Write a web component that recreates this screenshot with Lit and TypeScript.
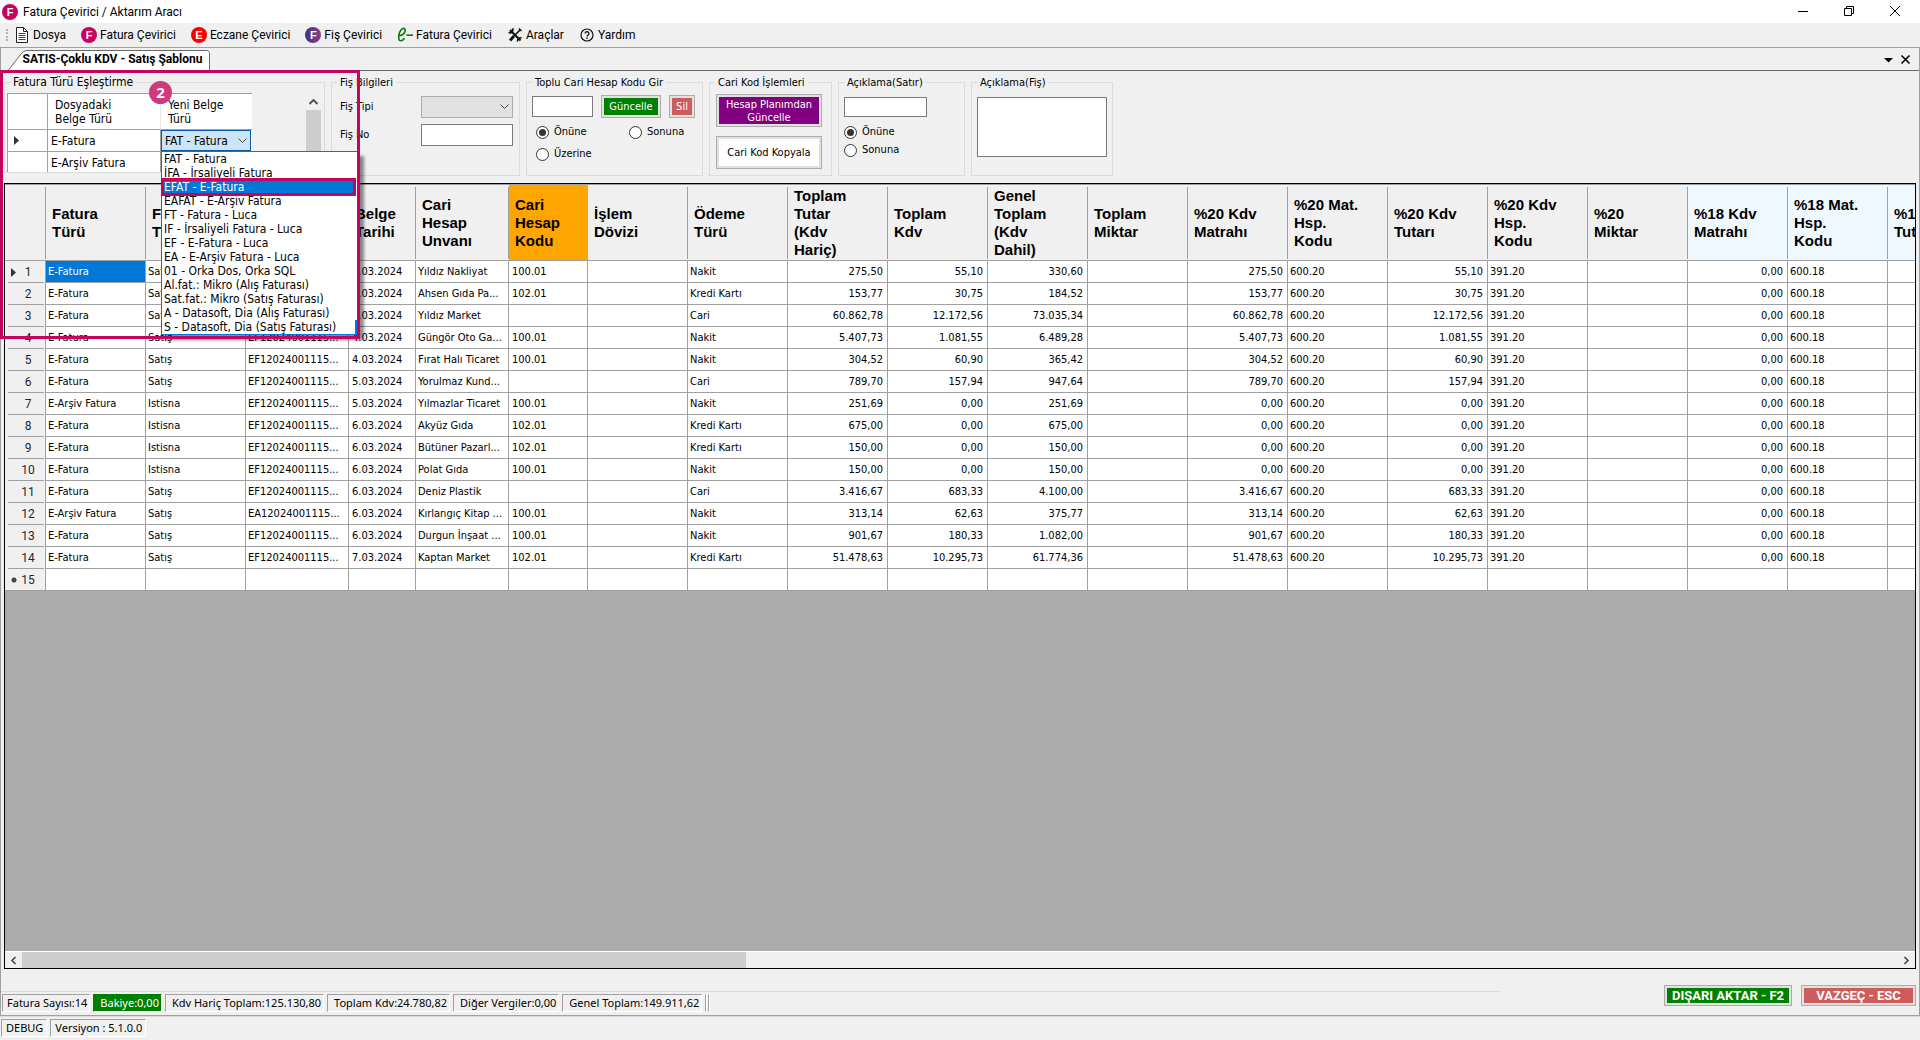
import { LitElement, html, css, svg, nothing } from "lit";
import { customElement, property, state } from "lit/decorators.js";
import { classMap } from "lit/directives/class-map.js";
import { styleMap } from "lit/directives/style-map.js";

const icons = {
  doc: svg`<path d="M2.500 .5h7l4 4v11h-11z" fill="#fff" stroke="#222"/><path d="M9.500 .5v4h4" fill="none" stroke="#222"/><path d="M4.500 6.500h7M4.500 8.500h7M4.500 10.500h7M4.500 12.500h7" stroke="#444"/>`,
  efatura: svg`<path d="M2.600 8.600C6 8.300 8.600 5.600 8.200 2.900 7.900 .8 5.600 .8 4.100 2.900 2.400 5.200 1.400 9 1.800 11.800c.4 2.900 3.400 2.400 5.800-.6" fill="none" stroke="#067a06" stroke-width="1.600"/><path d="M9.500 8.200h6.500" stroke="#067a06" stroke-width="1.600"/>`,
  tools: svg`<path d="M3 3l10.500 10.500" stroke="#111" stroke-width="2"/><path d="M1.600 5.400a3 3 0 0 0 4-4" fill="none" stroke="#111" stroke-width="2"/><path d="M14.600 11a3 3 0 0 0-4 3.600" fill="none" stroke="#111" stroke-width="1.600"/><path d="M13.500 2.500L7 9" stroke="#111" stroke-width="1.600"/><path d="M7 9l-4 4.500" stroke="#111" stroke-width="2.800"/><path d="M12 1.500l2.500 2.500" stroke="#111" stroke-width="1.400"/>`,
  help: svg`<circle cx="8" cy="8" r="6" fill="none" stroke="#111" stroke-width="1.200"/><path d="M6.100 6.500a1.900 1.900 0 1 1 2.900 1.600c-.7.400-1 .700-1 1.500" fill="none" stroke="#111" stroke-width="1.300"/><path d="M8 10.600v1.400" stroke="#111" stroke-width="1.300"/>`,
};

interface MenuItem { label: string; icon?: keyof typeof icons; letter?: string; tone?: string }
const menu: MenuItem[] = [
  { label: "Dosya", icon: "doc" },
  { label: "Fatura Çevirici", letter: "F", tone: "pink" },
  { label: "Eczane Çevirici", letter: "E", tone: "red" },
  { label: "Fiş Çevirici", letter: "F", tone: "violet" },
  { label: "Fatura Çevirici", icon: "efatura" },
  { label: "Araçlar", icon: "tools" },
  { label: "Yardım", icon: "help" },
];

@customElement("app-menu-bar")
export class AppMenuBar extends LitElement {
  static styles = css`
    :host { display: block; background: #f0f0f0; font: 12px/16px Roboto, "Noto Sans", sans-serif; color: #000; }
    .title { display: flex; align-items: center; height: 23px; background: #fff; padding: 0 17px 0 2px; }
    .title h1 { font: inherit; margin: 0 auto 0 5px; }
    .disc { width: 16px; height: 16px; border-radius: 50%; color: #fff; font: bold 11px/16px "Liberation Sans", sans-serif; text-align: center; flex: none; }
    .pink { background: #c4045f; }
    .red { background: #f80000; }
    .violet { background: linear-gradient(90deg, #3a3580, #8a4080); }
    .win { display: flex; gap: 31px; }
    button { font: inherit; color: inherit; background: none; border: 0; padding: 0; display: flex; align-items: center; gap: 3px; }
    svg { display: block; flex: none; }
    nav { display: flex; align-items: center; height: 24px; gap: 15px; padding-left: 6px; }
    .grip { border-left: 2px dotted #b4b4b4; height: 12px; margin-right: -9px; }
  `;
  render() {
    return html`
      <header class="title">
        <span class="disc pink">F</span>
        <h1>Fatura Çevirici / Aktarım Aracı</h1>
        <div class="win">
          <button aria-label="Simge durumuna küçült"><svg width="15" height="15"><path d="M2 7.500h10" stroke="#000"/></svg></button>
          <button aria-label="Önceki boyut"><svg width="15" height="15"><path d="M2.500 4.500h7v7h-7zM4.500 4.500v-2h7v7h-2" fill="none" stroke="#000"/></svg></button>
          <button aria-label="Kapat"><svg width="15" height="15"><path d="M2 2l10 10M12 2L2 12" stroke="#000"/></svg></button>
        </div>
      </header>
      <nav>
        <span class="grip"></span>
        ${menu.map(m => html`<button>
          ${m.icon ? html`<svg width="16" height="16" viewBox="0 0 16 16">${icons[m.icon]}</svg>`
            : html`<span class="disc ${m.tone!}">${m.letter}</span>`}
          <span>${m.label}</span></button>`)}
      </nav>`;
  }
}

const controls = css`
  fieldset { border: 1px solid #dcdcdc; margin: 0; padding: 0 5px 5px; min-width: 0; box-sizing: border-box; }
  legend { padding: 0 3px; margin-left: 0; line-height: 15px; height: 14px; white-space: nowrap; }
  input, textarea, select, button { font: inherit; color: inherit; box-sizing: border-box; margin: 0; border-radius: 0; }
  input:not([type="radio"]), textarea { border: 1px solid #7a7a7a; background: #fff; padding: 1px 3px; min-width: 0; outline: 0; }
  textarea { resize: none; display: block; }
  input[type="radio"] { appearance: none; width: 13px; height: 13px; border: 1px solid #333; border-radius: 50%; background: #fff; display: grid; place-items: center; flex: none; }
  input[type="radio"]:checked::before { content: ""; width: 7px; height: 7px; border-radius: 50%; background: #333; }
  .radio { display: flex; align-items: center; gap: 5px; }
  .btn { border: 1px solid #adadad; background: #e1e1e1; padding: 2px; display: grid; }
  .btn span { display: grid; place-items: center; text-align: center; color: #fff; }
  .green { background: #008000; }
  .coral { background: #cd5c5c; }
  .purple { background: #800080; }
  .btn .plain { background: #fff; color: #000; }
  .combo { display: grid; }
  .combo > * { grid-area: 1 / 1; }
  .combo select { appearance: none; width: 100%; outline: 0; }
  .combo svg { justify-self: end; align-self: center; pointer-events: none; }
`;

const docTypes = [
  "FAT - Fatura", "İFA - İrsaliyeli Fatura", "EFAT - E-Fatura", "EAFAT - E-Arşiv Fatura",
  "FT - Fatura - Luca", "IF - İrsaliyeli Fatura - Luca", "EF - E-Fatura - Luca",
  "EA - E-Arşiv Fatura - Luca", "01 - Orka Dos, Orka SQL", "Al.fat.: Mikro (Alış Faturası)",
  "Sat.fat.: Mikro (Satış Faturası)", "A - Datasoft, Dia (Alış Faturası)", "S - Datasoft, Dia (Satış Faturası)",
];

@customElement("type-mapping")
export class TypeMapping extends LitElement {
  @state() private active = 2;
  static styles = [controls, css`
    :host { display: block; position: relative; align-self: flex-start; width: 321px; font-size: 12px; }
    fieldset { padding: 4px 3px 0 2px; }
    legend { padding: 0 2px; margin-left: 4px; }
    .body { display: flex; justify-content: space-between; height: 79px; overflow: hidden; }
    table { border-collapse: separate; border-spacing: 0; table-layout: fixed; width: 245px; line-height: 14px; background: #fff; border-left: 1px solid #a0a0a0; border-top: 1px solid #a0a0a0; }
    th, td { font-weight: normal; text-align: left; padding: 0 3px; height: 21px; border-right: 1px solid #a0a0a0; border-bottom: 1px solid #a0a0a0; white-space: nowrap; }
    thead th { height: 35px; padding: 0 7px; }
    thead th:nth-child(2) { border-right-color: #e8e8e8; }
    td:last-child, thead th:last-child { border-right: 0; }
    tbody th { padding-left: 6px; }
    .pick { padding: 0; }
    .pick select { height: 21px; width: 90px; border: 1px solid #0a5ba4; background: #cce4f7; padding: 0 20px 0 3px; text-overflow: clip; }
    .pick svg { margin-right: 5px; }
    .vscroll { width: 15px; display: flex; flex-direction: column; }
    .vscroll button { border: 0; background: none; padding: 0; height: 17px; display: grid; place-items: center; }
    .vscroll i { flex: 1; background: #cdcdcd; }
    ul { position: absolute; z-index: 2; left: 157px; top: 76px; width: 199px; box-sizing: border-box; margin: 0; padding: 0; list-style: none; background: #fff; border: 1px solid #0078d7; box-shadow: 4px 5px 3px rgba(0, 0, 0, .45); line-height: 15px; }
    li { margin: 0 5px 0 1px; padding-left: 1px; white-space: nowrap; height: 14px; }
    li.on { background: #0078d7; color: #fff; outline: 3px solid #c4045f; outline-offset: -1px; position: relative; }
    ul::after { content: ""; position: absolute; right: 2px; bottom: 0; width: 2px; height: 14px; background: #0078d7; }
    .frame { position: absolute; z-index: 3; left: -4px; top: -5px; width: 354px; height: 263px; border: 3px solid #c4045f; pointer-events: none; }
    .badge { position: absolute; z-index: 4; left: 145px; top: 6px; width: 23px; height: 23px; border-radius: 50%; background: #cf3a7d; color: #fff; font: bold 15px/23px "Noto Sans", sans-serif; text-align: center; }
  `];
  render() {
    return html`
      <fieldset>
        <legend>Fatura Türü Eşleştirme</legend>
        <div class="body">
          <table>
            <colgroup><col style="width:40px"><col style="width:113px"><col></colgroup>
            <thead><tr><th></th><th>Dosyadaki<br>Belge Türü</th><th>Yeni Belge<br>Türü</th></tr></thead>
            <tbody>
              <tr><th><svg width="6" height="9"><path d="M0 0l5 4.500L0 9z" fill="#333"/></svg></th><td>E-Fatura</td>
                <td class="pick"><div class="combo">
                  <select aria-label="Yeni Belge Türü">${docTypes.map(t => html`<option>${t}</option>`)}</select>
                  <svg width="9" height="6"><path d="M.5 .5l4 4 4-4" fill="none" stroke="#444"/></svg>
                </div></td></tr>
              <tr><th></th><td>E-Arşiv Fatura</td><td></td></tr>
            </tbody>
          </table>
          <div class="vscroll">
            <button aria-label="Yukarı kaydır"><svg width="9" height="6"><path d="M.5 5l4-4 4 4" fill="none" stroke="#555" stroke-width="2"/></svg></button>
            <i></i>
          </div>
        </div>
      </fieldset>
      <ul role="listbox" aria-label="Yeni Belge Türü">
        ${docTypes.map((t, i) => html`<li role="option" aria-selected=${i === this.active} class=${classMap({ on: i === this.active })} @click=${() => (this.active = i)}>${t}</li>`)}
      </ul>
      <div class="frame"></div>
      <div class="badge">2</div>`;
  }
}

@customElement("option-groups")
export class OptionGroups extends LitElement {
  static styles = [controls, css`
    :host { display: flex; gap: 6px; padding: 4px 3px 7px; font: 11px/14px "DejaVu Sans Condensed", "Noto Sans", sans-serif; }
    .slip { width: 189px; }
    .slip .rows { display: grid; grid-template-columns: 81px 92px; gap: 6px 0; padding: 7px 0 0 3px; align-items: center; }
    .slip label { line-height: 16px; }
    .slip input, .slip select { height: 22px; width: 100%; }
    .slip select { border: 1px solid #adadad; background: #e1e1e1; opacity: 1; }
    .slip svg { margin-right: 4px; }
    .codes { width: 177px; }
    .line { display: flex; gap: 8px; padding-top: 6px; align-items: center; }
    .line input { width: 61px; height: 21px; }
    .line .btn { height: 23px; }
    .line .wide { width: 60px; }
    .line .narrow { width: 26px; }
    .radios { display: grid; grid-template-columns: 93px auto; grid-auto-rows: 22px; padding: 3px 0 0 4px; }
    .actions { width: 123px; }
    .actions .col { display: grid; gap: 9px; padding: 5px 0 1px; }
    .actions .btn { height: 33px; line-height: 13px; width: 106px; margin-left: 1px; }
    .row-note { width: 127px; }
    .row-note .in { width: 83px; height: 20px; margin-top: 8px; display: block; }
    .row-note .stack { display: grid; grid-auto-rows: 18px; padding-top: 6px; }
    .slip-note { width: 142px; }
    .slip-note textarea { width: 130px; height: 60px; margin-top: 8px; }
  `];
  render() {
    return html`
      <type-mapping></type-mapping>
      <fieldset class="slip"><legend>Fiş Bilgileri</legend>
        <div class="rows">
          <label for="tip">Fiş Tipi</label>
          <div class="combo"><select id="tip" disabled></select><svg width="9" height="6"><path d="M.5 .5l4 4 4-4" fill="none" stroke="#444"/></svg></div>
          <label for="no">Fiş No</label><input id="no" type="text">
        </div>
      </fieldset>
      <fieldset class="codes"><legend>Toplu Cari Hesap Kodu Gir</legend>
        <div class="line">
          <input type="text" aria-label="Cari hesap kodu">
          <button class="btn wide"><span class="green">Güncelle</span></button>
          <button class="btn narrow"><span class="coral">Sil</span></button>
        </div>
        <div class="radios">
          <label class="radio"><input type="radio" name="pos" checked>Önüne</label>
          <label class="radio"><input type="radio" name="pos">Sonuna</label>
          <label class="radio"><input type="radio" name="pos">Üzerine</label>
        </div>
      </fieldset>
      <fieldset class="actions"><legend>Cari Kod İşlemleri</legend>
        <div class="col">
          <button class="btn"><span class="purple">Hesap Planımdan<br>Güncelle</span></button>
          <button class="btn"><span class="plain">Cari Kod Kopyala</span></button>
        </div>
      </fieldset>
      <fieldset class="row-note"><legend>Açıklama(Satır)</legend>
        <input class="in" type="text" aria-label="Açıklama(Satır)">
        <div class="stack">
          <label class="radio"><input type="radio" name="note" checked>Önüne</label>
          <label class="radio"><input type="radio" name="note">Sonuna</label>
        </div>
      </fieldset>
      <fieldset class="slip-note"><legend>Açıklama(Fiş)</legend>
        <textarea aria-label="Açıklama(Fiş)"></textarea>
      </fieldset>`;
  }
}

interface Column { title: string; width: number; num?: boolean; tone?: string }
const columns: Column[] = [
  { title: "Fatura|Türü", width: 100 },
  { title: "Fiş|Türü", width: 100 },
  { title: "Belge|No", width: 103 },
  { title: "Belge|Tarihi", width: 67 },
  { title: "Cari|Hesap|Unvanı", width: 93 },
  { title: "Cari|Hesap|Kodu", width: 79, tone: "orange" },
  { title: "İşlem|Dövizi", width: 100 },
  { title: "Ödeme|Türü", width: 100 },
  { title: "Toplam|Tutar|(Kdv|Hariç)", width: 100, num: true },
  { title: "Toplam|Kdv", width: 100, num: true },
  { title: "Genel|Toplam|(Kdv|Dahil)", width: 100, num: true },
  { title: "Toplam|Miktar", width: 100, num: true },
  { title: "%20 Kdv|Matrahı", width: 100, num: true },
  { title: "%20 Mat.|Hsp.|Kodu", width: 100 },
  { title: "%20 Kdv|Tutarı", width: 100, num: true },
  { title: "%20 Kdv|Hsp.|Kodu", width: 100 },
  { title: "%20|Miktar", width: 100, num: true },
  { title: "%18 Kdv|Matrahı", width: 100, num: true, tone: "azure" },
  { title: "%18 Mat.|Hsp.|Kodu", width: 100, tone: "azure" },
  { title: "%18 Kdv|Tutarı", width: 100, num: true, tone: "azure" },
];

/* type | kind | date | customer | code | payment | net | vat | gross | 20% base */
const records = `
E-Fatura|Satış|1.03.2024|Yıldız Nakliyat|100.01|Nakit|275,50|55,10|330,60|275,50
E-Fatura|Satış|2.03.2024|Ahsen Gıda Pa...|102.01|Kredi Kartı|153,77|30,75|184,52|153,77
E-Fatura|Satış|3.03.2024|Yıldız Market||Cari|60.862,78|12.172,56|73.035,34|60.862,78
E-Fatura|Satış|4.03.2024|Güngör Oto Ga...|100.01|Nakit|5.407,73|1.081,55|6.489,28|5.407,73
E-Fatura|Satış|4.03.2024|Fırat Halı Ticaret|100.01|Nakit|304,52|60,90|365,42|304,52
E-Fatura|Satış|5.03.2024|Yorulmaz Kund...||Cari|789,70|157,94|947,64|789,70
E-Arşiv Fatura|Istisna|5.03.2024|Yılmazlar Ticaret|100.01|Nakit|251,69|0,00|251,69|0,00
E-Fatura|Istisna|6.03.2024|Akyüz Gıda|102.01|Kredi Kartı|675,00|0,00|675,00|0,00
E-Fatura|Istisna|6.03.2024|Bütüner Pazarl...|102.01|Kredi Kartı|150,00|0,00|150,00|0,00
E-Fatura|Istisna|6.03.2024|Polat Gıda|100.01|Nakit|150,00|0,00|150,00|0,00
E-Fatura|Satış|6.03.2024|Deniz Plastik||Cari|3.416,67|683,33|4.100,00|3.416,67
E-Arşiv Fatura|Satış|6.03.2024|Kırlangıç Kitap ...|100.01|Nakit|313,14|62,63|375,77|313,14
E-Fatura|Satış|6.03.2024|Durgun İnşaat ...|100.01|Nakit|901,67|180,33|1.082,00|901,67
E-Fatura|Satış|7.03.2024|Kaptan Market|102.01|Kredi Kartı|51.478,63|10.295,73|61.774,36|51.478,63`
  .trim().split("\n").map((line, i) => {
    const [type, kind, date, name, code, pay, net, vat, gross, base] = line.split("|");
    const no = (i === 11 ? "EA" : "EF") + "12024001115...";
    return [type, kind, no, date, name, code, "", pay, net, vat, gross, "", base, "600.20", vat, "391.20", "", "0,00", "600.18", ""];
  });

@customElement("invoice-grid")
export class InvoiceGrid extends LitElement {
  @property({ attribute: false }) rows: string[][] = records;
  static styles = css`
    :host { display: flex; flex-direction: column; flex: 1; min-height: 0; margin: 0 3px; border: 1px solid #000; background: #ababab; font: 11px/14px "DejaVu Sans Condensed", "Noto Sans", sans-serif; }
    .view { flex: 1; overflow: hidden; }
    table { border-collapse: separate; border-spacing: 0; table-layout: fixed; background: #fff; }
    th, td { box-sizing: border-box; height: 22px; padding: 0 2px; border-right: 1px solid #a0a0a0; border-bottom: 1px solid #a0a0a0; white-space: nowrap; overflow: hidden; text-align: left; font-weight: normal; }
    td.num { text-align: right; padding-right: 4px; }
    td.code { padding-left: 3px; }
    thead th { height: 77px; border-top: 1px solid #a0a0a0; border-right: 0; padding: 0 6px; background: #f0f0f0; font: bold 15px/18px "Liberation Sans", Arial, sans-serif; background-image: linear-gradient(#a0a0a0, #a0a0a0); background-size: 1px 72px; background-position: right 0 top 2px; background-repeat: no-repeat; }
    thead th.orange { background: orange; }
    thead th.azure { background-color: #f0f8ff; }
    tbody th { background: #f0f0f0; padding: 0; border-bottom: 0; background-image: linear-gradient(#a0a0a0, #a0a0a0); background-size: 36px 1px; background-position: 3px 21px; background-repeat: no-repeat; }
    .mark { display: grid; grid-template-columns: 12px 22px; align-items: center; justify-items: center; font: 12px/14px Roboto, sans-serif; color: #1c2733; }
    .mark svg { display: block; justify-self: end; }
    tr.last th { border-bottom: 1px solid #a0a0a0; background-image: none; }
    td.current { background: #0078d7; color: #fff; }
    .hscroll { display: flex; height: 16px; border-top: 1px solid #fff; background: #f0f0f0; }
    .hscroll button { width: 17px; border: 0; padding: 0; background: none; display: grid; place-items: center; }
    .track { flex: 1; display: flex; }
    .thumb { background: #cdcdcd; }
  `;
  private marker(i: number) {
    if (i === 0) return html`<svg width="6" height="9"><path d="M0 0l5 4.500L0 9z" fill="#333"/></svg>`;
    if (i === this.rows.length) return html`<svg width="6" height="6"><circle cx="3" cy="3" r="2.500" fill="#444"/></svg>`;
    return html`<span></span>`;
  }
  render() {
    const total = columns.reduce((s, c) => s + c.width, 41);
    const all = [...this.rows, columns.map(() => "")];
    return html`
      <div class="view"><table style=${styleMap({ width: total + "px" })}>
        <colgroup><col style="width:41px">${columns.map(c => html`<col style=${styleMap({ width: c.width + "px" })}>`)}</colgroup>
        <thead><tr><th></th>${columns.map(c => html`<th scope="col" class=${c.tone ?? ""}>${c.title.split("|").map((p, i) => html`${i ? html`<br>` : nothing}${p}`)}</th>`)}</tr></thead>
        <tbody>${all.map((r, i) => html`<tr class=${i === this.rows.length ? "last" : ""}>
          <th scope="row"><span class="mark">${this.marker(i)}<span>${i + 1}</span></span></th>
          ${r.map((v, j) => html`<td class=${classMap({ num: !!columns[j].num, code: j === 3 || j === 5, current: i === 0 && j === 0 })}>${v}</td>`)}
        </tr>`)}</tbody>
      </table></div>
      <div class="hscroll">
        <button aria-label="Sola kaydır"><svg width="7" height="9"><path d="M5.500 1L2 4.500 5.500 8" fill="none" stroke="#444" stroke-width="1.600"/></svg></button>
        <div class="track"><div class="thumb" style=${styleMap({ width: "38.6%" })}></div></div>
        <button aria-label="Sağa kaydır"><svg width="7" height="9"><path d="M1.500 1L5 4.500 1.500 8" fill="none" stroke="#444" stroke-width="1.600"/></svg></button>
      </div>`;
  }
}

@customElement("app-root")
export class AppRoot extends LitElement {
  static styles = [controls, css`
    :host { display: flex; flex-direction: column; min-height: 100vh; background: #f0f0f0; color: #000; overflow: hidden; }
    main { flex: 1; display: flex; flex-direction: column; border: 1px solid #a0a0a0; box-shadow: 0 1px #dcdcdc; }
    .tabs { display: flex; align-items: flex-end; justify-content: space-between; height: 22px; border-bottom: 1px solid #696969; padding: 0 8px 0 7px; }
    .tab { display: grid; border: 0; background: none; padding: 0; font: bold 12px/16px Roboto, "Noto Sans", sans-serif; }
    .tab > * { grid-area: 1 / 1; }
    .tab svg { width: 202px; height: 20px; display: block; }
    .tab span { padding: 1px 7px 0 14px; white-space: nowrap; }
    .tools { display: flex; gap: 7px; align-self: center; }
    .tools button { border: 0; background: none; padding: 0; }
    .tools svg { display: block; }
    footer { display: flex; gap: 164px; align-items: flex-start; padding-right: 3px; height: 46px; }
    .status { display: flex; gap: 3px; font: 11px/16px "Noto Sans", "Open Sans", sans-serif; }
    .status span { border: 1px solid #fff; border-left-color: #a0a0a0; border-top-color: #a0a0a0; padding: 0 2px 0 6px; white-space: nowrap; min-height: 16px; }
    .totals { flex: 1; margin-top: 22px; border-top: 1px solid #dcdcdc; padding: 2px 0 0 1px; }
    .totals span:first-child { padding-left: 4px; }
    .totals .balance { background: #008000; color: #fff; border-color: #008000 #fff #fff #008000; }
    .totals .stub { padding: 0; border-top-color: #f0f0f0; margin-right: -2px; }
    .final { display: flex; gap: 9px; padding-top: 16px; font: bold 13px/15px Roboto, "Noto Sans", sans-serif; }
    .final .btn { height: 21px; }
    .final .out { width: 128px; }
    .final .cancel { width: 115px; }
    .app { padding: 3px 0 3px 1px; }
    .app span { padding-left: 4px; padding-right: 3px; }
  `];
  render() {
    const totals = ["Kdv Hariç Toplam:125.130,80", "Toplam Kdv:24.780,82", "Diğer Vergiler:0,00", "Genel Toplam:149.911,62"];
    return html`
      <app-menu-bar></app-menu-bar>
      <main>
        <div class="tabs">
          <button class="tab"><svg viewBox="0 0 202 20"><path d="M.5 20L13 4Q15.500 .5 19 .5H199.500L201.500 2.500V20" fill="#fff" stroke="#696969"/></svg><span>SATIS-Çoklu KDV - Satış Şablonu</span></button>
          <div class="tools">
            <button aria-label="Sekme listesi"><svg width="9" height="11"><path d="M0 4h9L4.500 8.500z" fill="#000"/></svg></button>
            <button aria-label="Sekmeyi kapat"><svg width="11" height="11"><path d="M1.500 1.500l8 8M9.500 1.500l-8 8" stroke="#000" stroke-width="1.600"/></svg></button>
          </div>
        </div>
        <option-groups></option-groups>
        <invoice-grid></invoice-grid>
        <footer>
          <div class="status totals">
            <span>Fatura Sayısı:14</span><span class="balance">Bakiye:0,00</span>
            ${totals.map(t => html`<span>${t}</span>`)}<span class="stub"></span><span class="stub"></span>
          </div>
          <div class="final">
            <button class="btn out"><span class="green">DIŞARI AKTAR - F2</span></button>
            <button class="btn cancel"><span class="coral">VAZGEÇ - ESC</span></button>
          </div>
        </footer>
      </main>
      <div class="status app"><span>DEBUG</span><span>Versiyon : 5.1.0.0</span></div>`;
  }
}
